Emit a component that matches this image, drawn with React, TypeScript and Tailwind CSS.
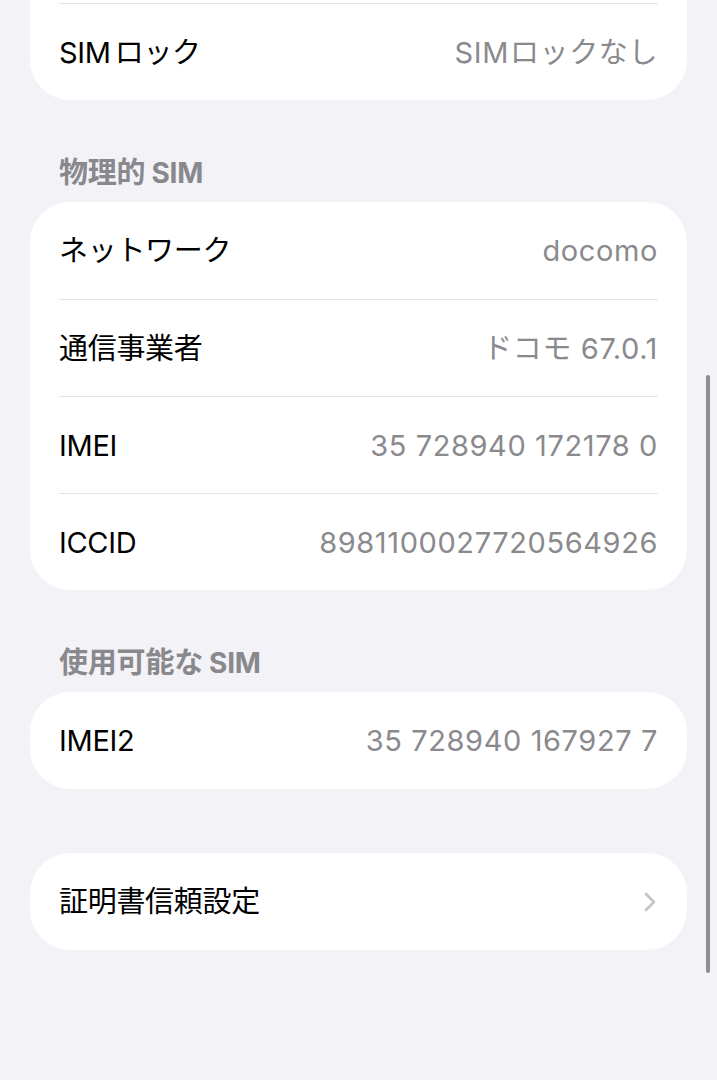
import React from "react";

const font = { fontFamily: '"Inter", "Noto Sans CJK JP", sans-serif' };

function Row({ label, value, chevron, first }: { label: React.ReactNode; value?: React.ReactNode; chevron?: boolean; first?: boolean }) {
  return (
    <div className="px-[29px]">
      <div
        className={
          "flex h-[97px] items-center justify-between " +
          (first ? "" : "border-t border-[#e3e3e8]")
        }
      >
        <span className="text-[29px] leading-none tracking-[-0.3px] text-black">{label}</span>
        {value && <span className="text-[29px] leading-none tracking-[0.6px] text-[#8a8a8e]">{value}</span>}
        {chevron && (
          <svg width="12" height="20" viewBox="0 0 12 20" className="mr-[2px]">
            <path d="M2 2 L10 10 L2 18" fill="none" stroke="#c4c4c8" strokeWidth="2.6" strokeLinecap="round" strokeLinejoin="round" />
          </svg>
        )}
      </div>
    </div>
  );
}

function Header({ jp }: { jp: string }) {
  return (
    <div className="px-[59px] pt-[58px] pb-[14px]">
      <span className="block text-[29px] font-bold leading-[29px] tracking-[-0.2px] text-[#88888d]">
        {jp}
        <span className="ml-[6px] text-[28px]">SIM</span>
      </span>
    </div>
  );
}

export default function App() {
  return (
    <div className="relative min-h-[1080px] w-full bg-[#f2f2f7]" style={font}>
      {/* SIM lock (continuation of previous group) */}
      <div className="mx-[30px] rounded-b-[40px] bg-white">
        <div className="h-[3px]" />
        <Row
          label={<>SIM<span className="ml-[4px]">ロック</span></>}
          value={<>SIM<span className="ml-[1px]">ロックなし</span></>}
        />
      </div>

      <Header jp="物理的" />
      <div className="mx-[30px] rounded-[40px] bg-white">
        <Row first label="ネットワーク" value="docomo" />
        <Row label="通信事業者" value="ドコモ 67.0.1" />
        <Row label="IMEI" value="35 728940 172178 0" />
        <Row label="ICCID" value="8981100027720564926" />
      </div>

      <Header jp="使用可能な" />
      <div className="mx-[30px] rounded-[40px] bg-white">
        <Row first label="IMEI2" value="35 728940 167927 7" />
      </div>

      <div className="mx-[30px] mt-[64px] rounded-[40px] bg-white">
        <Row first label="証明書信頼設定" chevron />
      </div>

      {/* scroll indicator */}
      <div className="absolute left-[706px] top-[375px] h-[598px] w-[4px] rounded-full bg-[#8e8e93]" />
    </div>
  );
}
